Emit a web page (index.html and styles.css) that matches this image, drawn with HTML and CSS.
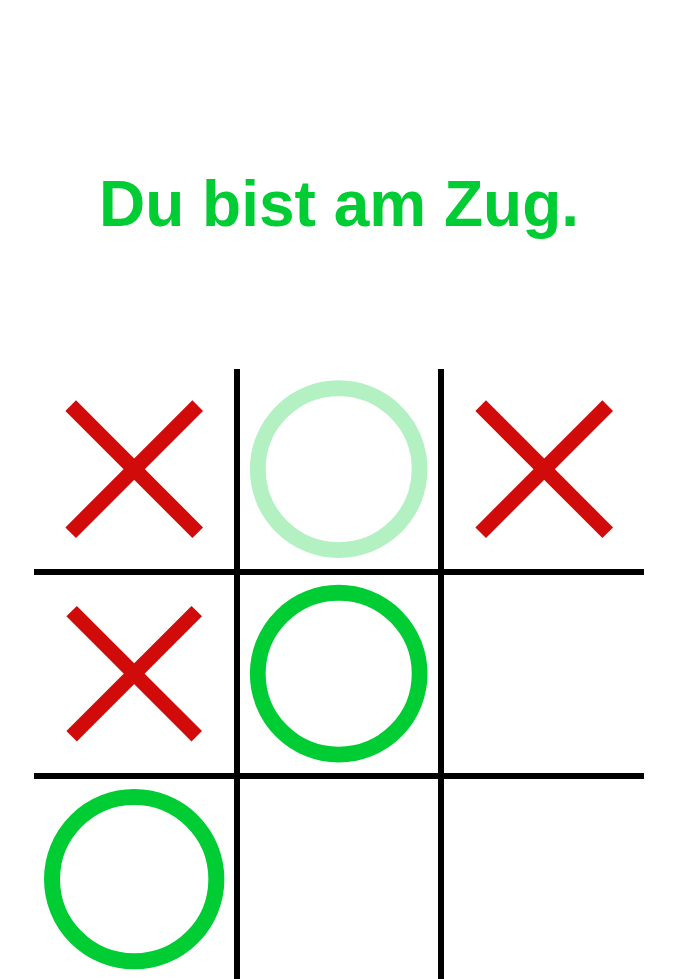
FILE: index.html
```html
<!DOCTYPE html>
<html lang="de">
<head>
<meta charset="utf-8">
<title>Tic Tac Toe</title>
<link rel="stylesheet" href="styles.css">
</head>
<body>
<main class="page">
  <h1 class="status">Du bist am Zug.</h1>
  <div class="board">
    <div class="cell br bb">
      <svg class="mark" viewBox="0 0 100 100"><line class="x" x1="18.3" y1="18.3" x2="81.7" y2="81.7"/><line class="x" x1="81.7" y1="18.3" x2="18.3" y2="81.7"/></svg>
    </div>
    <div class="cell bl br bb">
      <svg class="mark" viewBox="0 0 100 100"><circle class="o ghost" cx="50" cy="50" r="41"/></svg>
    </div>
    <div class="cell bl bb">
      <svg class="mark" viewBox="0 0 100 100"><line class="x" x1="18.3" y1="18.3" x2="81.7" y2="81.7"/><line class="x" x1="81.7" y1="18.3" x2="18.3" y2="81.7"/></svg>
    </div>
    <div class="cell br bt bb">
      <svg class="mark" viewBox="0 0 100 100"><line class="x" x1="18.3" y1="18.3" x2="81.7" y2="81.7"/><line class="x" x1="81.7" y1="18.3" x2="18.3" y2="81.7"/></svg>
    </div>
    <div class="cell bl br bt bb">
      <svg class="mark" viewBox="0 0 100 100"><circle class="o" cx="50" cy="50" r="41"/></svg>
    </div>
    <div class="cell bl bt bb"></div>
    <div class="cell br bt">
      <svg class="mark" viewBox="0 0 100 100"><circle class="o" cx="50" cy="50" r="41"/></svg>
    </div>
    <div class="cell bl br bt"></div>
    <div class="cell bl bt"></div>
  </div>
</main>
</body>
</html>
```

FILE: styles.css
```css
html, body {
  margin: 0;
  padding: 0;
  background: #ffffff;
  overflow: hidden;
}

.page {
  padding-top: 172px;
  font-family: "Liberation Sans", Arial, sans-serif;
}

.status {
  margin: 0;
  font-size: 64px;
  line-height: 64px;
  font-weight: bold;
  color: #00cc33;
  text-align: center;
}

.board {
  width: 90%;
  margin: 133px auto 0;
  display: grid;
  grid-template-columns: repeat(3, 1fr);
}

.cell {
  box-sizing: border-box;
  aspect-ratio: 1 / 1;
  border: 0 solid #000000;
  display: flex;
  align-items: center;
  justify-content: center;
}

.bl { border-left-width: 3px; }
.br { border-right-width: 3px; }
.bt { border-top-width: 3px; }
.bb { border-bottom-width: 3px; }

.mark {
  width: 100%;
  height: 100%;
  display: block;
}

.x {
  stroke: #d10a0a;
  stroke-width: 7.5;
  stroke-linecap: butt;
}

.o {
  fill: none;
  stroke: #00cc33;
  stroke-width: 8;
}

.o.ghost {
  stroke: #b3f0c2;
}
```
